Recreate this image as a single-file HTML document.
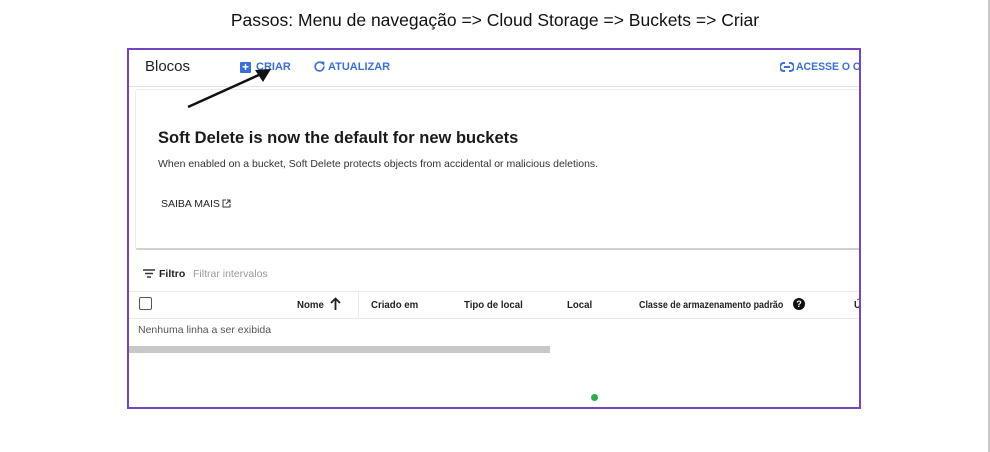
<!DOCTYPE html>
<html><head><meta charset="utf-8"><style>
*{margin:0;padding:0;box-sizing:border-box}
body{width:990px;height:452px;background:#fff;position:relative;overflow:hidden;font-family:"Liberation Sans",Arial,sans-serif}
.a{position:absolute;white-space:nowrap}
.blue{color:#3a6fd8;font-weight:bold;font-size:11px}
.th{font-size:10.5px;font-weight:bold;color:#222;top:298px;transform:scaleX(.92);transform-origin:left}
</style></head><body>
<div class="a" style="left:0;width:990px;top:10px;text-align:center;font-size:17.5px;color:#111;padding-left:0">Passos: Menu de navegação =&gt; Cloud Storage =&gt; Buckets =&gt; Criar</div>
<div class="a" style="left:988px;top:0;width:2px;height:452px;background:#c8c8c8"></div>

<div class="a" style="left:127px;top:48px;width:734px;height:361px;border:2px solid #7347bb;overflow:hidden">
  <div class="a" style="left:16px;top:8px;font-size:15px;color:#222">Blocos</div>
  <div class="a" style="left:111px;top:12px;width:11px;height:11px;background:#3a6fd8;border-radius:1px;color:#fff;font-size:12px;line-height:10px;text-align:center;font-weight:bold">+</div>
  <div class="a blue" style="left:127px;top:11px">CRIAR</div>
  <svg class="a" style="left:184px;top:10px" width="13" height="13" viewBox="0 0 24 24"><path d="M17.6 6.4A8 8 0 1 0 20 12" fill="none" stroke="#3a6fd8" stroke-width="3"/><path d="M13 3h8v8z" fill="#3a6fd8"/></svg>
  <div class="a blue" style="left:199px;top:11px">ATUALIZAR</div>
  <svg class="a" style="left:651px;top:12px" width="14" height="10" viewBox="0 0 14 10"><path d="M5 1H3.5a3.5 4 0 0 0 0 8H5M9 1h1.5a3.5 4 0 0 1 0 8H9M4 5h6" fill="none" stroke="#3a6fd8" stroke-width="2"/></svg>
  <div class="a blue" style="left:667px;top:11px;transform:scaleX(.95);transform-origin:left">ACESSE O CA</div>
  <div class="a" style="left:0;top:36px;width:734px;height:1px;background:#e4e4e4"></div>
  <div class="a" style="left:6px;top:39px;width:740px;height:161px;background:#fff;border:1px solid #eee;border-bottom:2px solid #d0d0d0;border-radius:3px"></div>
  <div class="a" style="left:29px;top:79px;font-size:16.5px;font-weight:bold;color:#1a1a1a">Soft Delete is now the default for new buckets</div>
  <div class="a" style="left:29px;top:108px;font-size:10.5px;color:#333">When enabled on a bucket, Soft Delete protects objects from accidental or malicious deletions.</div>
  <div class="a" style="left:32px;top:148px;font-size:10.5px;color:#222">SAIBA MAIS</div>
  <svg class="a" style="left:93px;top:149px" width="9" height="9" viewBox="0 0 9 9"><path d="M4 1H1v7h7V5M5 1h3v3M8 1L4 5" fill="none" stroke="#333" stroke-width="1"/></svg>
  <svg class="a" style="left:14px;top:219px" width="12" height="9" viewBox="0 0 12 9"><path d="M0 1h12M2 4.5h8M4 8h4" stroke="#333" stroke-width="1.6"/></svg>
  <div class="a" style="left:30px;top:218px;font-size:10.5px;font-weight:bold;color:#222">Filtro</div>
  <div class="a" style="left:64px;top:218px;font-size:10.5px;color:#999">Filtrar intervalos</div>
  <div class="a" style="left:0;top:241px;width:734px;height:1px;background:#eaeaea"></div>
  <div class="a" style="left:0;top:268px;width:734px;height:1px;background:#eaeaea"></div>
  <div class="a" style="left:229px;top:241px;width:1px;height:27px;background:#eaeaea"></div>
  <div class="a" style="left:10px;top:247px;width:13px;height:13px;border:1.5px solid #555;border-radius:2px"></div>
  <div class="a th" style="left:168px;top:249px">Nome</div>
  <svg class="a" style="left:201px;top:247px" width="11" height="13" viewBox="0 0 11 13"><path d="M5.5 13V2M1 6l4.5-4.5L10 6" fill="none" stroke="#222" stroke-width="1.8"/></svg>
  <div class="a th" style="left:242px;top:249px">Criado em</div>
  <div class="a th" style="left:335px;top:249px">Tipo de local</div>
  <div class="a th" style="left:438px;top:249px">Local</div>
  <div class="a th" style="left:510px;top:249px;transform:scaleX(.85)">Classe de armazenamento padrão</div>
  <div class="a" style="left:664px;top:248px;width:12px;height:12px;border-radius:50%;background:#111;color:#fff;font-size:9px;font-weight:bold;text-align:center;line-height:12px">?</div>
  <div class="a th" style="left:725px;top:249px">Ú</div>
  <div class="a" style="left:9px;top:274px;font-size:10.5px;color:#555">Nenhuma linha a ser exibida</div>
  <div class="a" style="left:0;top:296px;width:421px;height:7px;background:#c8c8c8"></div>
  <div class="a" style="left:462px;top:344px;width:7px;height:7px;border-radius:50%;background:#2eaa4f"></div>
</div>
<svg class="a" style="left:185px;top:66px" width="90" height="44" viewBox="0 0 90 44"><path d="M3 41L76 8" stroke="#111" stroke-width="2.5"/><path d="M86 3L70 4l8 12z" fill="#111"/></svg>
</body></html>
